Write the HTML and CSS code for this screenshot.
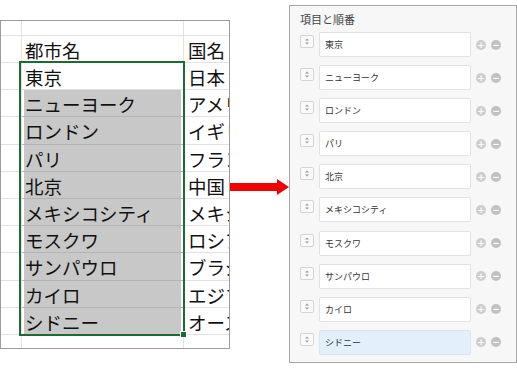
FILE: index.html
```html
<!DOCTYPE html>
<html lang="ja">
<head>
  <meta charset="UTF-8" />
  <title>項目と順番</title>
  <link rel="stylesheet" href="styles.css">
</head>
<body>

  <div class="sheet">
    <div class="cell head"></div><div class="cell"></div><div class="cell col-c"></div>
    <div class="cell head"></div><div class="cell">都市名</div><div class="cell col-c">国名</div>
    <div class="cell head"></div><div class="cell">東京</div><div class="cell col-c">日本</div>
    <div class="cell head"></div><div class="cell sel">ニューヨーク</div><div class="cell col-c">アメリカ</div>
    <div class="cell head"></div><div class="cell sel">ロンドン</div><div class="cell col-c">イギリス</div>
    <div class="cell head"></div><div class="cell sel">パリ</div><div class="cell col-c">フランス</div>
    <div class="cell head"></div><div class="cell sel">北京</div><div class="cell col-c">中国</div>
    <div class="cell head"></div><div class="cell sel">メキシコシティ</div><div class="cell col-c">メキシコ</div>
    <div class="cell head"></div><div class="cell sel">モスクワ</div><div class="cell col-c">ロシア</div>
    <div class="cell head"></div><div class="cell sel">サンパウロ</div><div class="cell col-c">ブラジル</div>
    <div class="cell head"></div><div class="cell sel">カイロ</div><div class="cell col-c">エジプト</div>
    <div class="cell head"></div><div class="cell sel">シドニー</div><div class="cell col-c">オーストラリア</div>
    <div class="cell head last"></div><div class="cell last"></div><div class="cell col-c last"></div>

    <!-- 選択範囲 -->
    <div class="selection"><div class="handle"></div></div>
  </div>

  <svg class="arrow" width="59" height="16" viewBox="0 0 59 16">
    <polygon points="0,4 47,4 47,0 59,8 47,16 47,12 0,12" fill="#f00000" />
  </svg>

  <div class="panel">
    <div class="panel-title">項目と順番</div>
    <ul class="item-list" id="itemList"></ul>
  </div>

  <script>
    const items = ["東京", "ニューヨーク", "ロンドン", "パリ", "北京", "メキシコシティ", "モスクワ", "サンパウロ", "カイロ", "シドニー"];
    const itemList = document.getElementById("itemList");

    items.forEach((name, i) => {
      const li = document.createElement("li");
      li.className = "item-row";
      li.innerHTML = `
        <div class="stepper">
          <svg width="12" height="11" viewBox="0 0 12 11">
            <polygon points="6,2.5 8,4.5 4,4.5" fill="#9a9a9a" />
            <polygon points="6,8.5 8,6.5 4,6.5" fill="#9a9a9a" />
          </svg>
        </div>
        <div class="item-input${i === items.length - 1 ? " active" : ""}">${name}</div>
        <div class="circle-btn plus">+</div>
        <div class="circle-btn minus">&minus;</div>
      `;
      itemList.appendChild(li);
    });
  </script>

</body>
</html>
```

FILE: styles.css
```css
body {
  margin: 0;
  padding: 0;
  background-color: white;
  font-family: "Noto Sans CJK JP", "Noto Sans", sans-serif;
  display: flex;
  align-items: flex-start;
}

.sheet {
  position: relative;
  margin-top: 20px;
  width: 230px;
  height: 329px;
  box-sizing: border-box;
  border: 1px solid #9c9c9c;
  display: grid;
  grid-template-columns: 21px 162px 1fr;
  grid-template-rows: 15px 27px repeat(10, 27.2px) 1fr;
  overflow: hidden;
}

.cell {
  box-sizing: border-box;
  border-right: 1px solid #e2e2e2;
  border-bottom: 1px solid #e2e2e2;
  font-size: 18.5px;
  line-height: 26px;
  padding: 1px 0 0 3px;
  color: #111;
  white-space: nowrap;
}

.cell.col-c {
  border-right: none;
  overflow: hidden;
  padding-left: 4px;
}

.cell.last {
  border-bottom: none;
}

.cell.sel {
  background-color: #c8c8c8;
  border-bottom-color: #b4b4b4;
  box-shadow: inset 2px 0 #fff, inset -2px 0 #fff;
}

.selection {
  position: absolute;
  left: 18px;
  top: 40px;
  width: 166px;
  height: 275px;
  box-sizing: border-box;
  border: 2px solid #1f6a34;
}

.handle {
  position: absolute;
  right: -4px;
  bottom: -4px;
  width: 5px;
  height: 5px;
  background-color: #1f6a34;
  border: 1px solid #fff;
}

.arrow {
  margin-top: 179px;
}

.panel {
  margin-top: 5px;
  width: 228px;
  height: 358px;
  box-sizing: border-box;
  border: 1px solid #a9a9a9;
  background-color: #f7f7f7;
  padding: 5px 0 0 10px;
}

.panel-title {
  font-size: 11px;
  line-height: 16px;
  color: #444;
  margin-bottom: 5px;
}

.item-list {
  list-style: none;
  margin: 0;
  padding: 0;
  display: flex;
  flex-direction: column;
  gap: 8.1px;
}

.item-row {
  display: flex;
  align-items: center;
  height: 25px;
}

.stepper {
  align-self: flex-start;
  margin-top: 3px;
  width: 14px;
  height: 13px;
  box-sizing: border-box;
  border: 1px solid #d4d4d4;
  border-radius: 2px;
  background-color: #fafafa;
  display: flex;
}

.item-input {
  margin-left: 5px;
  width: 152px;
  height: 25px;
  box-sizing: border-box;
  border: 1px solid #e2e2e2;
  border-radius: 2px;
  background-color: white;
  font-size: 9px;
  line-height: 23px;
  padding-left: 5px;
  color: #333;
}

.item-input.active {
  background-color: #e3effb;
  border-color: #d8e6f3;
}

.circle-btn {
  width: 10px;
  height: 10px;
  border-radius: 50%;
  margin-left: 5px;
  color: white;
  font-family: "DejaVu Sans", sans-serif;
  font-size: 9px;
  font-weight: bold;
  line-height: 10px;
  text-align: center;
}

.circle-btn.plus {
  background-color: #cdcdcd;
}

.circle-btn.minus {
  background-color: #c1c1c1;
}
```
